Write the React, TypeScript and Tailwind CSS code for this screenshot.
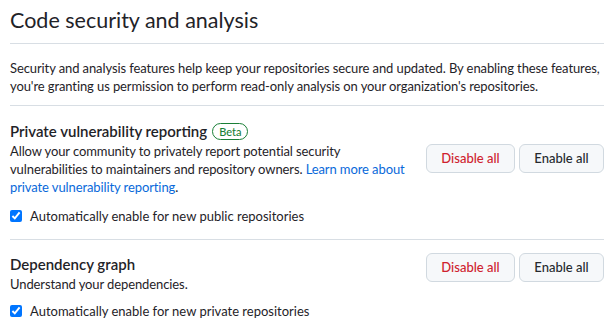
import React from "react";

const font = { fontFamily: 'Lato, "Liberation Sans", sans-serif' };

function Buttons({ className = "" }: { className?: string }) {
  return (
    <div className={"flex gap-[4px] shrink-0 " + className}>
      <button className="h-[29px] w-[89px] rounded-[6px] border border-[#d1d9e0] bg-[#f6f8fa] text-[13px] font-medium text-[#cf222e] leading-none">
        Disable all
      </button>
      <button className="h-[29px] w-[85px] rounded-[6px] border border-[#d1d9e0] bg-[#f6f8fa] text-[13px] font-medium text-[#25292e] leading-none">
        Enable all
      </button>
    </div>
  );
}

function Check({ label }: { label: string }) {
  return (
    <label className="flex items-center gap-[8px] text-[13px] text-[#1f2328] leading-[20px]">
      <input type="checkbox" defaultChecked className="m-0 h-[12px] w-[12px]" />
      <span>{label}</span>
    </label>
  );
}

export default function App() {
  return (
    <div style={font} className="w-[611px] h-[333px] overflow-hidden bg-white pl-[10px] pr-[7px] text-[#1f2328]">
      <div className="pt-[5px] pb-[8px] border-b border-[#d8dee4]">
        <h2 className="text-[21.5px] font-normal leading-[30px] text-[#1f2328]">Code security and analysis</h2>
      </div>
      <p className="pt-[15px] pb-[10px] text-[13px] leading-[18px] tracking-[-0.1px] border-b border-[#d8dee4] whitespace-nowrap">
        Security and analysis features help keep your repositories secure and updated. By enabling these features,
        <br />
        you're granting us permission to perform read-only analysis on your organization's repositories.
      </p>

      <div className="pt-[14px] pb-[13px] border-b border-[#d8dee4]">
        <div className="flex items-start justify-between">
          <div className="min-w-0">
            <div className="flex h-[22px] items-center gap-[5px]">
              <h3 className="text-[15px] font-semibold leading-[22px]">Private vulnerability reporting</h3>
              <span className="inline-flex h-[17px] items-center rounded-full border border-[#1a7f37] px-[6px] text-[11px] font-medium leading-none text-[#1a7f37]">
                Beta
              </span>
            </div>
            <p className="text-[13px] leading-[18px] tracking-[-0.1px] whitespace-nowrap">
              Allow your community to privately report potential security
              <br />
              vulnerabilities to maintainers and repository owners.{" "}
              <a className="text-[#0969da]">Learn more about</a>
              <br />
              <a className="text-[#0969da]">private vulnerability reporting</a>.
            </p>
          </div>
          <Buttons className="mt-[24px]" />
        </div>
        <div className="mt-[10px]">
          <Check label="Automatically enable for new public repositories" />
        </div>
      </div>

      <div className="pt-[13px]">
        <div className="flex items-start justify-between">
          <div>
            <h3 className="text-[15px] font-semibold leading-[22px]">Dependency graph</h3>
            <p className="text-[13px] leading-[18px] tracking-[-0.1px]">Understand your dependencies.</p>
          </div>
          <Buttons className="mt-0" />
        </div>
        <div className="mt-[8px]">
          <Check label="Automatically enable for new private repositories" />
        </div>
      </div>
    </div>
  );
}
